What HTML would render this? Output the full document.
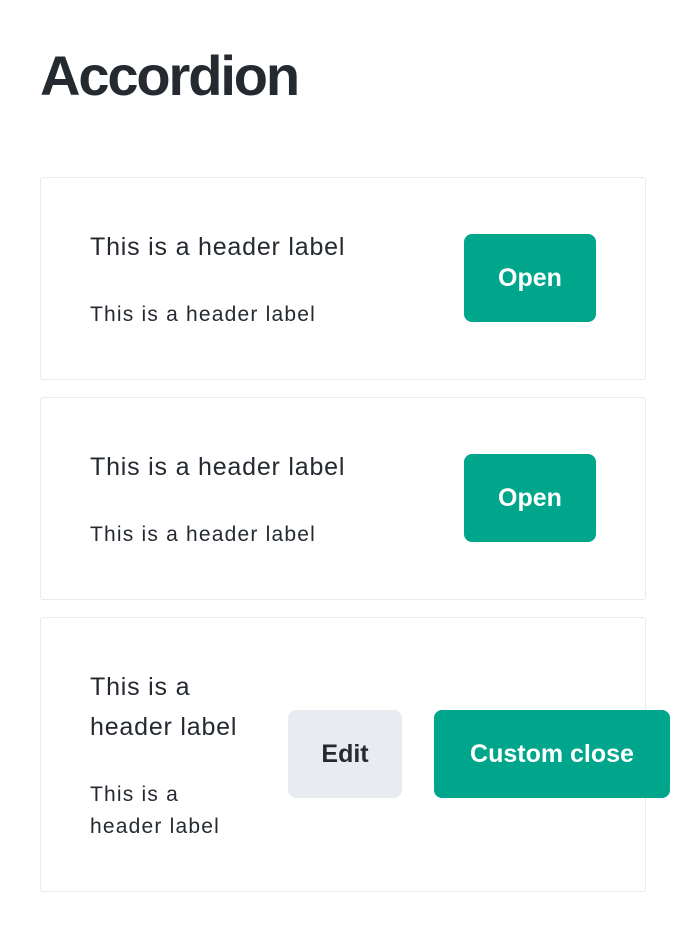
<!DOCTYPE html>
<html><head><meta charset="utf-8"><style>
body{margin:0;width:686px;height:948px;background:#fff;font-family:"Liberation Sans",Arial,sans-serif;color:#252a31;position:relative;overflow:hidden}
.a{position:absolute}
h1{position:absolute;left:40px;top:44px;margin:0;font-size:56px;font-weight:bold;line-height:64px;letter-spacing:-2.1px}
.card{position:absolute;left:40px;width:606px;border:1px solid #e8ebee;border-radius:3px;box-sizing:border-box}
.t1{font-size:25px;line-height:40px;letter-spacing:0.8px}
.t2{font-size:21px;line-height:32px;letter-spacing:1.2px}
.btn{position:absolute;border-radius:8px;font-size:25px;font-weight:bold;display:flex;align-items:center;justify-content:center;height:88px}
.g{background:#00a68b;color:#fff}
.e{background:#e8ecf0;color:#252a31}
</style></head><body>
<h1>Accordion</h1>
<div class="card" style="top:177px;height:203px"></div>
<div class="a t1" style="left:90px;top:227px">This is a header label</div>
<div class="a t2" style="left:90px;top:299px">This is a header label</div>
<div class="btn g" style="left:464px;top:234px;width:132px">Open</div>
<div class="card" style="top:397px;height:203px"></div>
<div class="a t1" style="left:90px;top:447px">This is a header label</div>
<div class="a t2" style="left:90px;top:519px">This is a header label</div>
<div class="btn g" style="left:464px;top:454px;width:132px">Open</div>
<div class="card" style="top:617px;height:275px"></div>
<div class="a t1" style="left:90px;top:667px;width:175px">This is a<br>header label</div>
<div class="a t2" style="left:90px;top:779px">This is a<br>header label</div>
<div class="btn e" style="left:288px;top:710px;width:114px">Edit</div>
<div class="btn g" style="left:434px;top:710px;width:236px">Custom close</div>
</body></html>
